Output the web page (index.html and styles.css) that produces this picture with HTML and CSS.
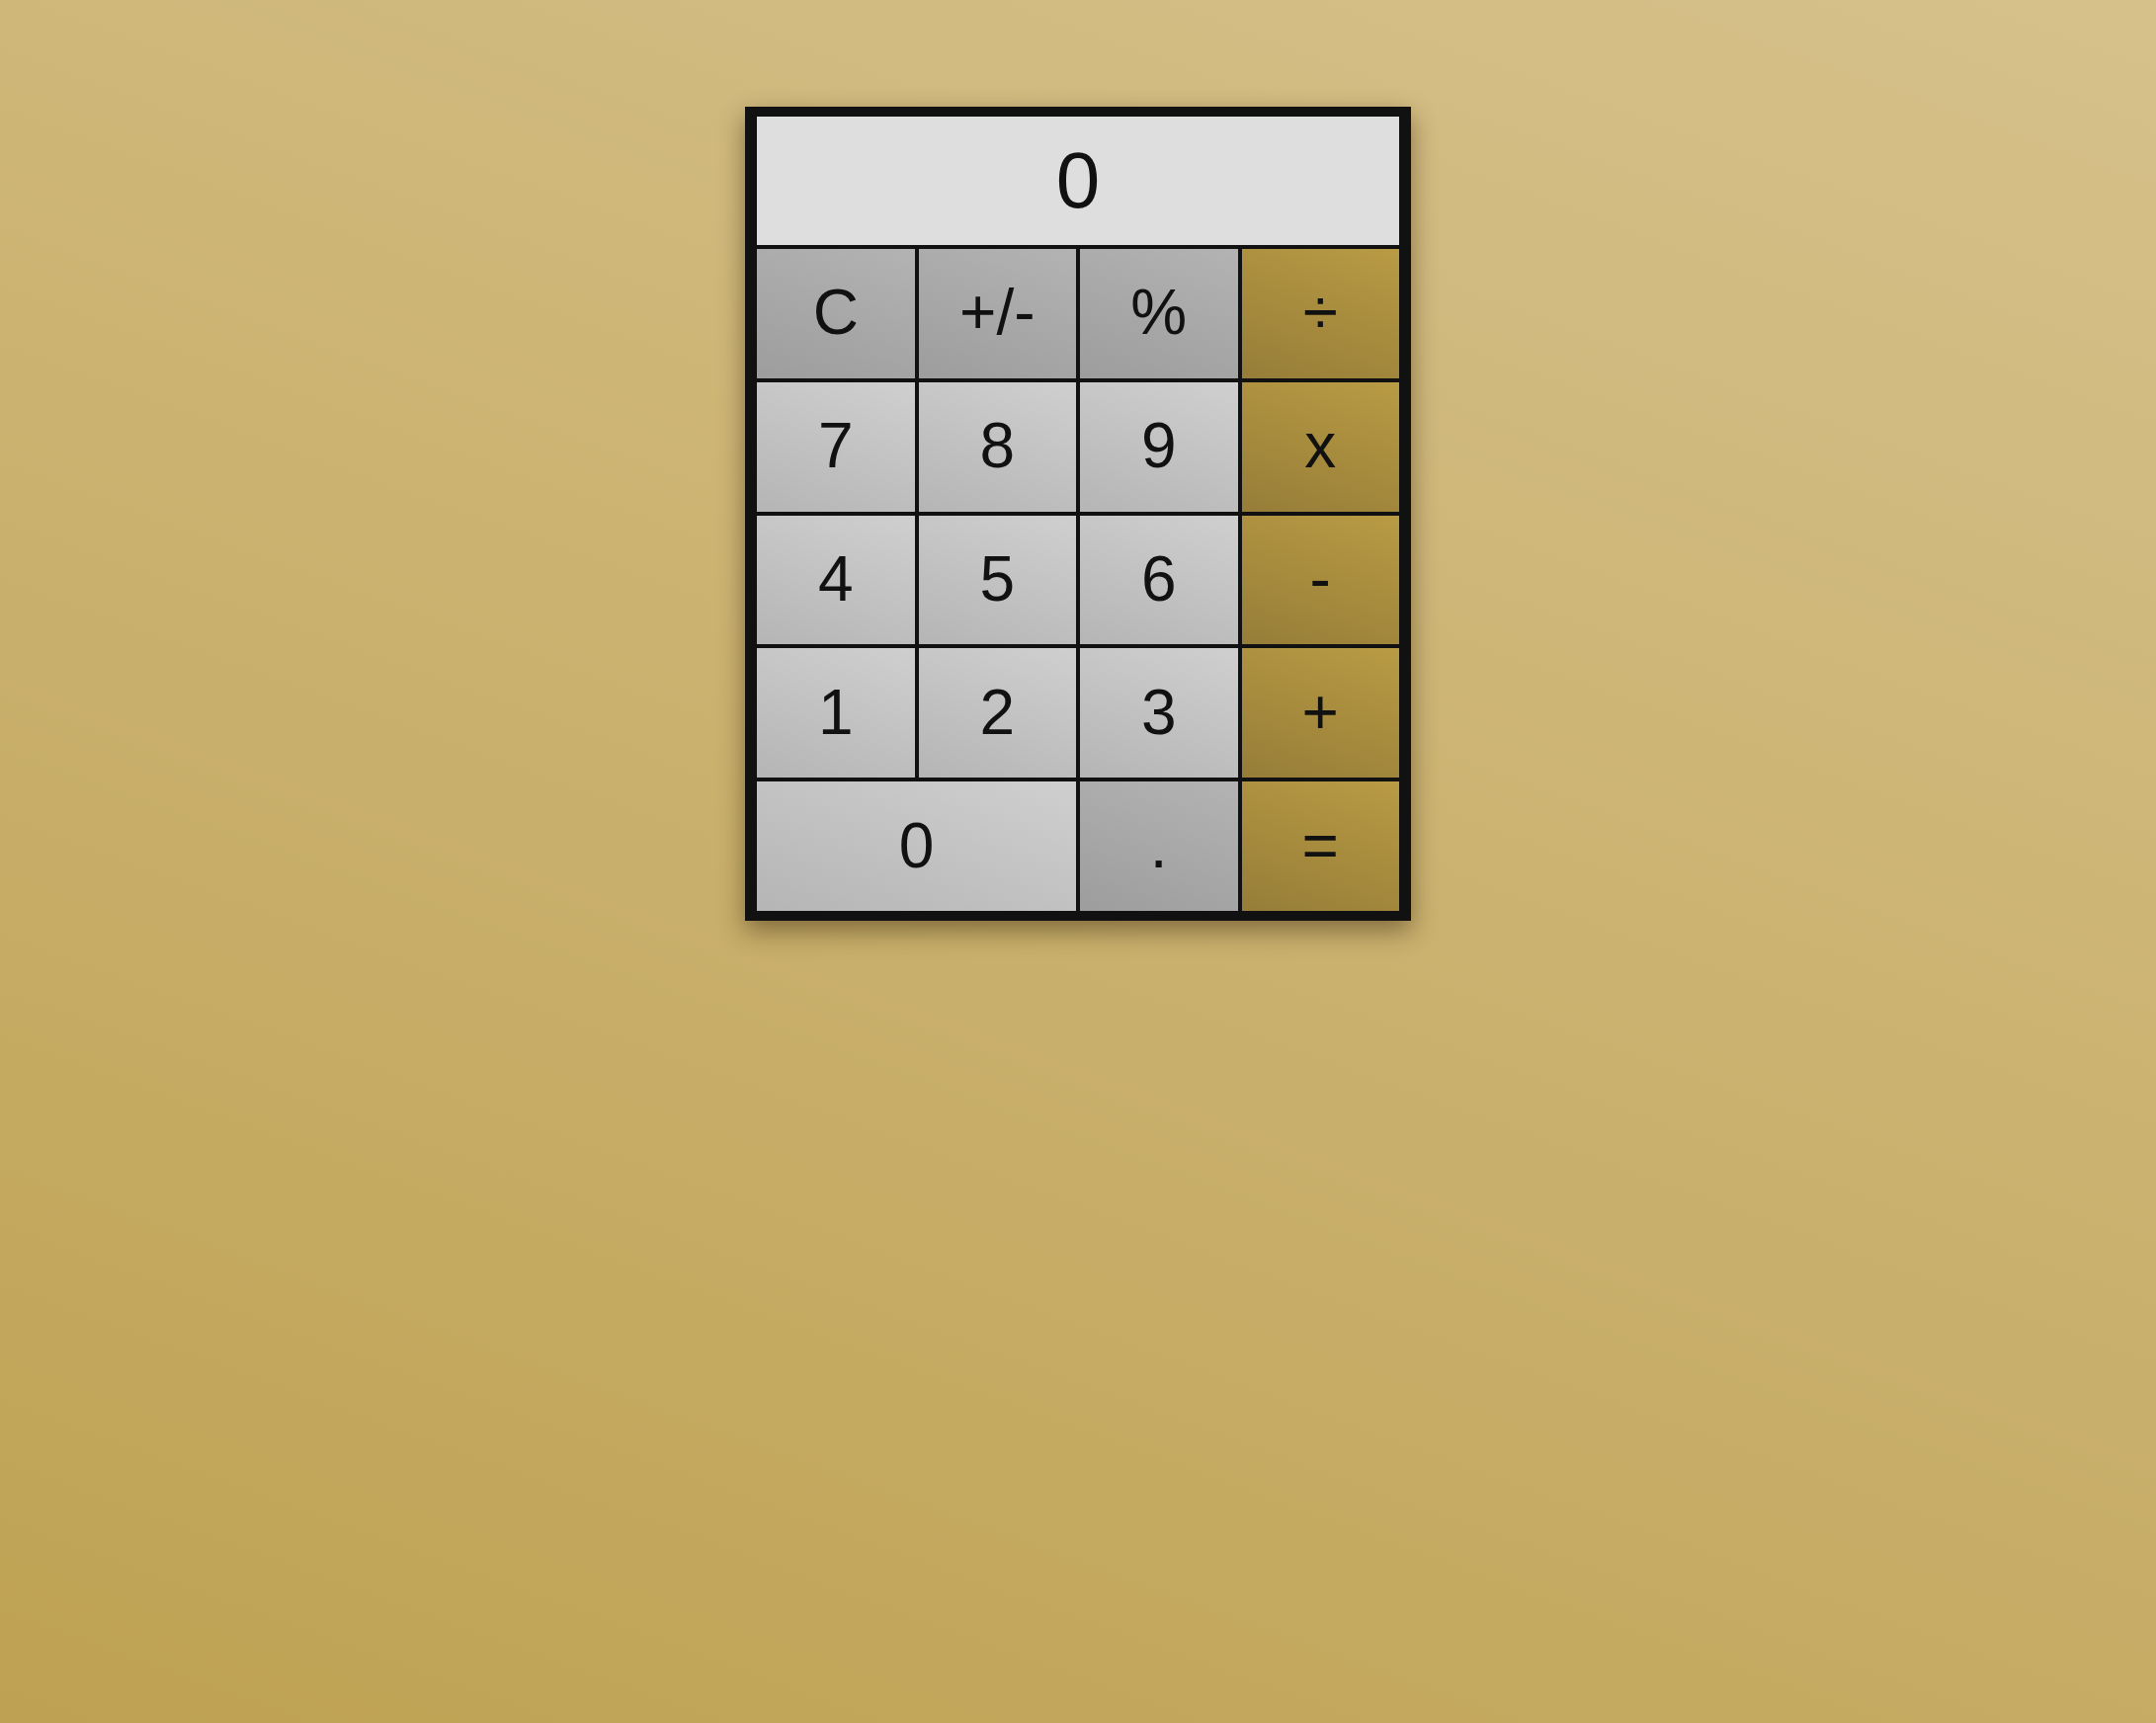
FILE: index.html
```html
<!DOCTYPE html>
<html lang="en">
<head>
<meta charset="utf-8">
<title>Calculator</title>
<link rel="stylesheet" href="styles.css">
</head>
<body>
<div class="calculator">
  <div class="display">0</div>
  <div class="keys">
    <button class="key fn">C</button>
    <button class="key fn">+/-</button>
    <button class="key fn">%</button>
    <button class="key op">÷</button>
    <button class="key num">7</button>
    <button class="key num">8</button>
    <button class="key num">9</button>
    <button class="key op">x</button>
    <button class="key num">4</button>
    <button class="key num">5</button>
    <button class="key num">6</button>
    <button class="key op">-</button>
    <button class="key num">1</button>
    <button class="key num">2</button>
    <button class="key num">3</button>
    <button class="key op">+</button>
    <button class="key num wide">0</button>
    <button class="key fn">.</button>
    <button class="key op">=</button>
  </div>
</div>
</body>
</html>
```
FILE: styles.css
```css
html, body {
  margin: 0;
  padding: 0;
}
body {
  min-height: 1744px;
  background: linear-gradient(200deg, #d6c18b 0%, #bea152 100%);
  font-family: "Liberation Sans", Arial, sans-serif;
  padding-top: 108px;
  box-sizing: border-box;
}
.calculator {
  width: 674px;
  margin: 0 auto;
  box-sizing: border-box;
  background: #111;
  padding: 10px 12px;
  display: flex;
  flex-direction: column;
  gap: 4px;
  box-shadow: 0 10px 24px rgba(40, 25, 0, 0.45);
}
.display {
  height: 130px;
  background: #dedede;
  color: #111;
  font-size: 80px;
  display: flex;
  align-items: center;
  justify-content: center;
  line-height: 1;
}
.keys {
  display: grid;
  grid-template-columns: repeat(4, 1fr);
  grid-auto-rows: 130.8px;
  gap: 4px;
}
.key {
  border: 0;
  margin: 0;
  padding: 0 0 2px 0;
  font-family: "Liberation Sans", Arial, sans-serif;
  font-size: 64px;
  color: #111;
  display: flex;
  align-items: center;
  justify-content: center;
  line-height: 1;
}
.wide {
  grid-column: span 2;
}
.num {
  background: linear-gradient(200deg, #cfcfcf 0%, #b5b5b5 100%);
}
.fn {
  background: linear-gradient(200deg, #b3b3b3 0%, #9d9d9d 100%);
}
.op {
  background: linear-gradient(200deg, #b99b44 0%, #967d38 100%);
}
```
